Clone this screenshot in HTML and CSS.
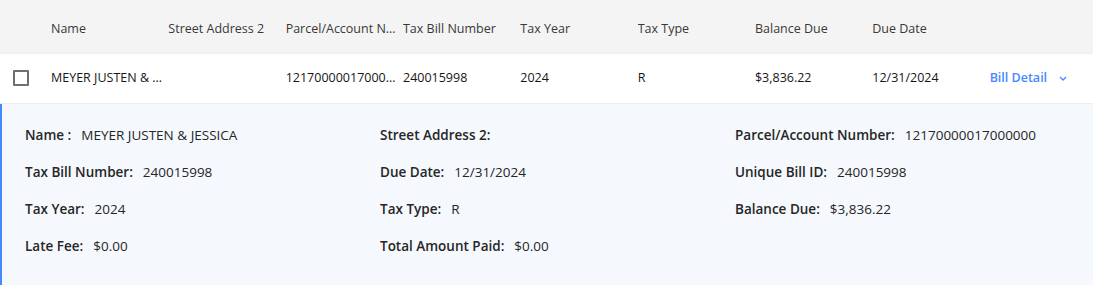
FILE: index.html
```html
<!DOCTYPE html>
<html lang="en">
<head>
    <meta charset="UTF-8">
    <meta name="viewport" content="width=device-width, initial-scale=1.0">
    <title>Tax Bills</title>
    <link rel="stylesheet" href="styles.css">
</head>
<body>
    <div class="bill-table">
        <!-- Header -->
        <div class="table-row table-head">
            <div class="cell cell-check"></div>
            <div class="cell">Name</div>
            <div class="cell">Street Address 2</div>
            <div class="cell">Parcel/Account Number</div>
            <div class="cell">Tax Bill Number</div>
            <div class="cell">Tax Year</div>
            <div class="cell">Tax Type</div>
            <div class="cell">Balance Due</div>
            <div class="cell">Due Date</div>
            <div class="cell"></div>
        </div>

        <!-- Bill row -->
        <div class="table-row table-body">
            <div class="cell cell-check"><span class="checkbox"></span></div>
            <div class="cell">MEYER JUSTEN &amp; JESSICA</div>
            <div class="cell"></div>
            <div class="cell">12170000017000000</div>
            <div class="cell">240015998</div>
            <div class="cell">2024</div>
            <div class="cell">R</div>
            <div class="cell">$3,836.22</div>
            <div class="cell">12/31/2024</div>
            <div class="cell">
                <a href="#" class="bill-detail">Bill Detail
                    <svg class="chevron" width="8" height="5" viewBox="0 0 8 5"><path d="M1 1l3 3 3-3" fill="none" stroke="currentColor" stroke-width="1.3"/></svg>
                </a>
            </div>
        </div>

        <!-- Expanded detail -->
        <div class="detail-panel">
            <div class="detail-item"><span class="label">Name :</span><span class="value">MEYER JUSTEN &amp; JESSICA</span></div>
            <div class="detail-item"><span class="label">Street Address 2:</span><span class="value"></span></div>
            <div class="detail-item"><span class="label">Parcel/Account Number:</span><span class="value">12170000017000000</span></div>

            <div class="detail-item"><span class="label">Tax Bill Number:</span><span class="value">240015998</span></div>
            <div class="detail-item"><span class="label">Due Date:</span><span class="value">12/31/2024</span></div>
            <div class="detail-item"><span class="label">Unique Bill ID:</span><span class="value">240015998</span></div>

            <div class="detail-item"><span class="label">Tax Year:</span><span class="value">2024</span></div>
            <div class="detail-item"><span class="label">Tax Type:</span><span class="value">R</span></div>
            <div class="detail-item"><span class="label">Balance Due:</span><span class="value">$3,836.22</span></div>

            <div class="detail-item"><span class="label">Late Fee:</span><span class="value">$0.00</span></div>
            <div class="detail-item"><span class="label">Total Amount Paid:</span><span class="value">$0.00</span></div>
        </div>
    </div>
</body>
</html>
```

FILE: styles.css
```css
body {
    margin: 0;
    font-family: 'Open Sans', 'Noto Sans', sans-serif;
    font-size: 12.5px;
    color: #262626;
    background-color: #ffffff;
}

.table-row {
    display: grid;
    grid-template-columns: 51px repeat(8, 117.33px) 1fr;
    align-items: center;
}

.table-head {
    height: 52px;
    padding-top: 4px;
    box-sizing: border-box;
    background-color: #f4f4f4;
    color: #393939;
    box-shadow: 0 1px 3px rgba(0, 0, 0, 0.12);
    position: relative;
    z-index: 1;
}

.table-body {
    height: 51px;
    border-bottom: 1px solid #eeeeee;
    color: #161616;
}

.cell {
    padding-right: 4px;
    white-space: nowrap;
    overflow: hidden;
    text-overflow: ellipsis;
}

.cell-check {
    padding-left: 13px;
    display: flex;
    align-items: center;
}

.checkbox {
    width: 12px;
    height: 12px;
    border: 2px solid #6f6f6f;
    border-radius: 1px;
    margin-top: 1px;
}

.bill-detail {
    color: #4589ff;
    font-weight: 600;
    text-decoration: none;
    display: flex;
    align-items: center;
}

.chevron {
    margin-left: 12px;
    margin-top: 1px;
}

.detail-panel {
    background-color: #f5f9fd;
    border-left: 2px solid #4589ff;
    padding: 12px 0 20px 23px;
    height: 182px;
    box-sizing: border-box;
    display: grid;
    grid-template-columns: 355px 355px 1fr;
    grid-auto-rows: 37px;
    align-items: center;
    font-size: 13.5px;
}

.detail-item {
    white-space: nowrap;
}

.label {
    font-weight: 600;
    color: #262626;
    margin-right: 10px;
}

.value {
    color: #262626;
}
```
